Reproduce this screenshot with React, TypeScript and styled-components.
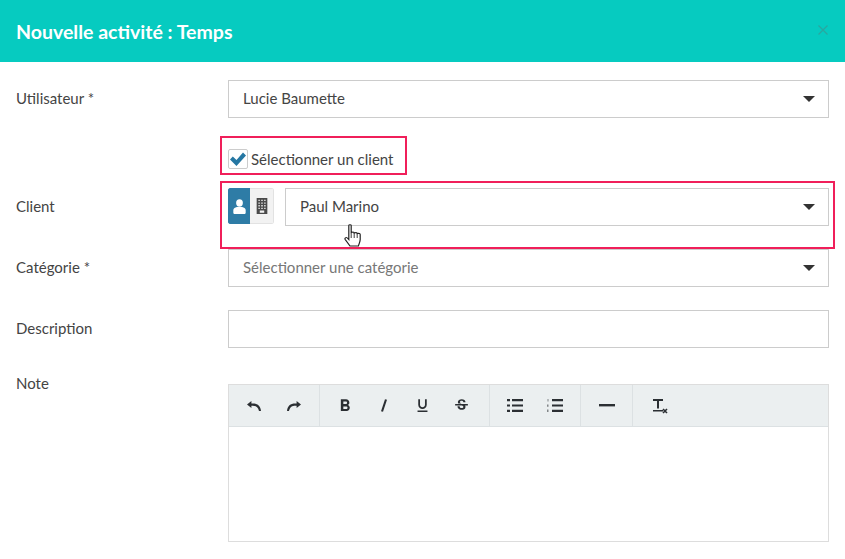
import React from 'react';
import styled, { createGlobalStyle } from 'styled-components';
import { MdFormatBold, MdFormatUnderlined, MdStrikethroughS } from 'react-icons/md';

const GlobalStyle = createGlobalStyle`
  html, body {
    margin: 0;
    padding: 0;
    background: #ffffff;
    overflow: hidden;
  }
  * {
    box-sizing: border-box;
  }
`;

const Modal = styled.div`
  position: relative;
  width: 845px;
  height: 559px;
  overflow: hidden;
  background: #ffffff;
  color: #444444;
  font-family: 'Lato', 'Noto Sans', sans-serif;
  font-size: 15px;
`;

const Header = styled.div`
  height: 62px;
  background: #06cbc0;
  padding: 0 16px;
  display: flex;
  align-items: center;
  justify-content: space-between;
`;

const Title = styled.h1`
  margin: 0;
  font-size: 19.5px;
  font-weight: 700;
  color: #ffffff;
`;

const Close = styled.span`
  display: flex;
  color: #2aa79f;
  margin: 0 1px 3px 0;
`;

const Form = styled.div`
  padding: 18px 16px 0;
`;

const Row = styled.div<{ $gap?: number; $top?: boolean }>`
  display: grid;
  grid-template-columns: 212px 1fr;
  align-items: ${(p) => (p.$top ? 'start' : 'center')};
  margin-bottom: ${(p) => p.$gap ?? 23}px;
`;

const Label = styled.label`
  color: #444444;
  padding-bottom: 2px;
`;

const Select = styled.div<{ $placeholder?: boolean }>`
  flex: 1;
  height: 38px;
  border: 1px solid #cccccc;
  background: #ffffff;
  padding: 0 13px 2px 14px;
  display: flex;
  align-items: center;
  justify-content: space-between;
  color: ${(p) => (p.$placeholder ? '#777777' : '#444444')};
`;

const Caret = styled.span`
  width: 0;
  height: 0;
  margin-top: 2px;
  border-left: 6px solid transparent;
  border-right: 6px solid transparent;
  border-top: 6px solid #333333;
`;

const CheckLine = styled.div`
  display: flex;
  align-items: center;
  gap: 3px;
  height: 24px;
  padding-bottom: 2px;
`;

const CheckBox = styled.span`
  width: 20px;
  height: 20px;
  border: 1px solid #cccccc;
  border-radius: 2px;
  display: flex;
  align-items: center;
  justify-content: center;
`;

const ClientLine = styled.div`
  display: flex;
  align-items: flex-start;
  gap: 11px;
`;

const Toggle = styled.div`
  width: 46px;
  height: 36px;
  display: flex;
  border-radius: 3px;
  overflow: hidden;
`;

const ToggleButton = styled.span<{ $active?: boolean }>`
  flex: ${(p) => (p.$active ? '0 0 22px' : '1')};
  display: flex;
  align-items: center;
  justify-content: center;
  background: ${(p) => (p.$active ? '#2e7ca6' : '#f2f2f2')};
  border: 1px solid ${(p) => (p.$active ? '#2e7ca6' : '#e2e2e2')};
  border-left-width: ${(p) => (p.$active ? 1 : 0)}px;
`;

const TextInput = styled.div`
  height: 38px;
  border: 1px solid #cccccc;
`;

const NoteLabel = styled(Label)`
  display: block;
  line-height: 24px;
`;

const Editor = styled.div`
  height: 158px;
  margin-top: 13px;
  border: 1px solid #dddddd;
`;

const Toolbar = styled.div`
  height: 42px;
  background: #ebeff0;
  border-bottom: 1px solid #dce1e3;
  display: flex;
`;

const ToolGroup = styled.div<{ $last?: boolean; $trail?: number }>`
  display: flex;
  align-items: center;
  padding: 0 ${(p) => p.$trail ?? 5}px 0 5px;
  border-right: ${(p) => (p.$last ? 'none' : '1px solid #dce1e3')};
`;

const ToolButton = styled.span<{ $width?: number }>`
  width: ${(p) => p.$width ?? 40}px;
  display: flex;
  align-items: center;
  justify-content: center;
  color: #2b2f33;
`;

const Annotation = styled.div`
  position: absolute;
  border: 2px solid #f01f5a;
  pointer-events: none;
`;

const CheckAnnotation = styled(Annotation)`
  left: 220px;
  top: 136px;
  width: 187px;
  height: 39px;
`;

const ClientAnnotation = styled(Annotation)`
  left: 220px;
  top: 181px;
  width: 615px;
  height: 68px;
`;

const Cursor = styled.svg`
  position: absolute;
  left: 344px;
  top: 224px;
`;

const UndoIcon = ({ flip }: { flip?: boolean }) => (
  <svg width="16" height="12" viewBox="0 0 16 12" style={flip ? { transform: 'scaleX(-1)' } : undefined}>
    <path d="M5.4 1 1 4.6l4.4 3.4V5.700c3.6-.3 6.6.5 7.6 5.300h2c-.4-5.600-4-8-9.600-7.500z" fill="currentColor" />
  </svg>
);

const ItalicIcon = () => (
  <svg width="8" height="13" viewBox="0 0 8 13">
    <path d="M6 .5 2 12.500" stroke="currentColor" strokeWidth="2.100" fill="none" />
  </svg>
);

const BulletListIcon = () => (
  <svg width="16" height="13" viewBox="0 0 16 13">
    <path d="M0 0h3v2.200H0zM0 5.400h3v2.200H0zM0 10.800h3V13H0zM5 0h11v2.200H5zM5 5.400h11v2.200H5zM5 10.800h11V13H5z" fill="currentColor" />
  </svg>
);

const NumberListIcon = () => (
  <svg width="16" height="13" viewBox="0 0 16 13">
    <path d="M5 0h11v2.200H5zM5 5.400h11v2.200H5zM5 10.800h11V13H5z" fill="currentColor" />
    <path d="M.5 0h1v2.500h-1zM0 5.400h1.500v2.400H0zM0 10.500h1.500V13H0z" fill="currentColor" opacity=".55" />
  </svg>
);

const ClearIcon = () => (
  <svg width="18" height="18" viewBox="0 0 18 18">
    <path d="M2 2h10v2H8v7.500H6V4H2zM2 13h10v1.500H2z" fill="currentColor" />
    <path d="M12 12l4 4M16 12l-4 4" stroke="currentColor" strokeWidth="1.600" fill="none" />
  </svg>
);

const App: React.FC = () => (
  <Modal>
    <GlobalStyle />
    <Header>
      <Title>Nouvelle activité : Temps</Title>
      <Close>
        <svg width="10" height="10" viewBox="0 0 10 10">
          <path d="M.5.5l9 9M9.500.5l-9 9" stroke="currentColor" strokeWidth="1.200" fill="none" />
        </svg>
      </Close>
    </Header>
    <Form>
      <Row $gap={30}>
        <Label>Utilisateur *</Label>
        <Select>
          Lucie Baumette
          <Caret />
        </Select>
      </Row>
      <Row $gap={16}>
        <span />
        <CheckLine>
          <CheckBox>
            <svg width="16" height="14" viewBox="0 0 16 14">
              <path d="M0 7.500 2.800 4.500l3.700 3.500L13 .5l3 3L6.500 14z" fill="#2577a3" />
            </svg>
          </CheckBox>
          Sélectionner un client
        </CheckLine>
      </Row>
      <Row>
        <Label>Client</Label>
        <ClientLine>
          <Toggle>
            <ToggleButton $active>
              <svg width="13" height="15" viewBox="0 0 14 17">
                <ellipse cx="7" cy="4.500" rx="3.800" ry="4.200" fill="#ffffff" />
                <path d="M0 16v-3.500C0 10.500 2 9.500 4 9h6c2 .5 4 1.500 4 3.500V16c0 .5-.5 1-1 1H1c-.5 0-1-.5-1-1z" fill="#ffffff" />
              </svg>
            </ToggleButton>
            <ToggleButton>
              <svg width="12" height="16" viewBox="0 0 12 18">
                <path
                  fillRule="evenodd"
                  d="M0 0h12v18H0zM2 2v1.500h1.500V2zM5.200 2v1.500h1.600V2zM8.500 2v1.500H10V2zM2 5v1.500h1.500V5zM5.200 5v1.500h1.600V5zM8.500 5v1.500H10V5zM2 8v1.500h1.500V8zM5.200 8v1.500h1.600V8zM8.500 8v1.500H10V8zM2 11v1.500h1.500V11zM5.200 11v1.500h1.600V11zM8.500 11v1.500H10V11zM3.500 14v2.500h5V14z"
                  fill="#4a4a4a"
                />
              </svg>
            </ToggleButton>
          </Toggle>
          <Select>
            Paul Marino
            <Caret />
          </Select>
        </ClientLine>
      </Row>
      <Row>
        <Label>Catégorie *</Label>
        <Select $placeholder>
          Sélectionner une catégorie
          <Caret />
        </Select>
      </Row>
      <Row>
        <Label>Description</Label>
        <TextInput />
      </Row>
      <Row $top>
        <NoteLabel>Note</NoteLabel>
        <Editor>
          <Toolbar>
            <ToolGroup>
              <ToolButton><UndoIcon /></ToolButton>
              <ToolButton><UndoIcon flip /></ToolButton>
            </ToolGroup>
            <ToolGroup $trail={8}>
              <ToolButton $width={39}><MdFormatBold size={20} /></ToolButton>
              <ToolButton $width={39}><ItalicIcon /></ToolButton>
              <ToolButton $width={39}><MdFormatUnderlined size={17} /></ToolButton>
              <ToolButton $width={39}><MdStrikethroughS size={17} /></ToolButton>
            </ToolGroup>
            <ToolGroup>
              <ToolButton><BulletListIcon /></ToolButton>
              <ToolButton><NumberListIcon /></ToolButton>
            </ToolGroup>
            <ToolGroup>
              <ToolButton $width={41}>
                <svg width="16" height="3" viewBox="0 0 16 3"><rect width="16" height="2.400" fill="currentColor" /></svg>
              </ToolButton>
            </ToolGroup>
            <ToolGroup $last>
              <ToolButton $width={44}><ClearIcon /></ToolButton>
            </ToolGroup>
          </Toolbar>
        </Editor>
      </Row>
    </Form>
    <CheckAnnotation />
    <ClientAnnotation />
    <Cursor width="18" height="23" viewBox="0 0 15 23" preserveAspectRatio="none">
      <path
        d="M4 1.500c0-1 2-1 2 0v7l1.500-.5c.6 0 1 .2 1 1l1.500-.5c.6 0 1 .4 1 1l1.200-.3c.8 0 1.300.5 1.300 1.300v5c0 2-1 4.500-1.500 6.500H5L1 15.500c-.7-1.500.7-2.500 1.800-1.500L4 15.500z"
        fill="#ffffff"
        stroke="#222222"
        strokeWidth="1"
      />
      <path d="M6 9v5M8.500 9v5M11 9.500V14" stroke="#222222" strokeWidth=".8" />
    </Cursor>
  </Modal>
);

export default App;
